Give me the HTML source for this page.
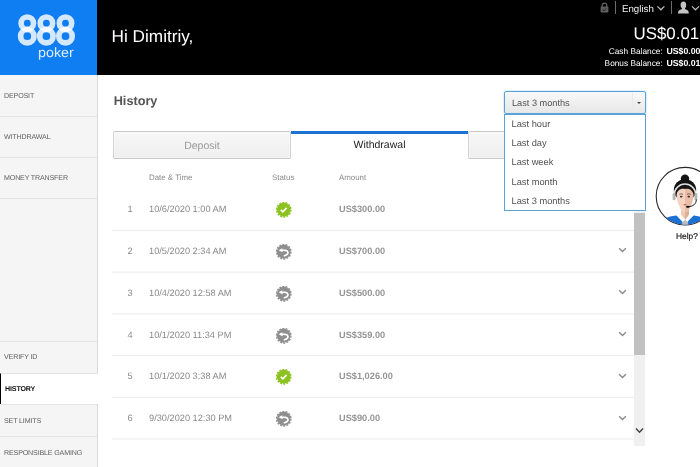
<!DOCTYPE html>
<html><head><meta charset="utf-8">
<style>
*{box-sizing:border-box;margin:0;padding:0}
html,body{width:700px;height:467px;overflow:hidden;background:#fff;text-rendering:geometricPrecision;font-family:"Liberation Sans",sans-serif;}
#hdr{position:absolute;left:0;top:0;width:700px;height:75px;background:#000;}
#logo{position:absolute;left:0;top:0;width:97px;height:75px;background:#0f7ef2;}
#hi{position:absolute;left:111.600px;top:25.500px;color:#fff;font-size:17.2px;line-height:20px;white-space:nowrap}
#side{position:absolute;left:0;top:75px;width:98px;height:392px;background:#f5f5f5;border-right:1px solid #dadada;}
.it{position:absolute;left:0;width:97px;font-size:7.1px;color:#606060;letter-spacing:-0.15px;padding-left:4px;border-bottom:1px solid #e4e4e4;white-space:nowrap}
.t{height:41px;line-height:41px}
.b{height:32px;line-height:33px;border-bottom:none;border-top:1px solid #e4e4e4}
#main{position:absolute;left:98px;top:75px;width:602px;height:392px;background:#fff}
.abs{position:absolute;white-space:nowrap}
.tab{background:linear-gradient(#f7f7f7,#efefef);border:1px solid #cdcdcd;border-radius:1.500px;font-size:10.5px;text-align:center;line-height:28px;box-shadow:inset 0 0 2px #fff;border-color:#c9c9c9 #d4d4d4}
.th{font-size:7.9px;color:#8a8a8a;line-height:10px;margin-top:1px}
.r{font-size:9.22px;color:#8a8a8a;line-height:12px}
b.r{color:#949494}
</style></head><body>
<div id="wrap" style="position:absolute;left:0;top:0;width:700px;height:467px;overflow:hidden;will-change:transform">
<div id="hdr">
 <div id="logo">
  <svg width="97" height="75" viewBox="0 0 97 75">
   <g fill="none" stroke="#fff" stroke-opacity="0.82">
    <circle cx="27.3" cy="23.2" r="6.2" stroke-width="5.6"/><circle cx="27.3" cy="36.2" r="6.7" stroke-width="5.7"/>
    <circle cx="46.4" cy="23.2" r="6.2" stroke-width="5.6"/><circle cx="46.4" cy="36.2" r="6.7" stroke-width="5.7"/>
    <circle cx="65.5" cy="23.2" r="6.2" stroke-width="5.6"/><circle cx="65.5" cy="36.2" r="6.7" stroke-width="5.7"/>
   </g>
   <text x="38" y="57" textLength="35.8" lengthAdjust="spacingAndGlyphs" font-family="Liberation Sans, sans-serif" font-size="13.5" fill="#fff" fill-opacity="0.85">poker</text>
  </svg>
 </div>
 <div id="hi">Hi Dimitriy,</div>
 <svg class="abs" style="left:598px;top:0" width="102" height="16" viewBox="598 0 102 16">
  <!-- lock -->
  <path d="M602.2 7 v-1.6 a2.3 2.3 0 0 1 4.6 0 V7" fill="none" stroke="#5e5e5e" stroke-width="1.300"/>
  <rect x="600.6" y="6.6" width="7.8" height="6" rx="0.800" fill="#5e5e5e"/>
  <path d="M602.7 9.6 l1.3 1.3 2.3 -2.5" fill="none" stroke="#222" stroke-width="1"/>
  <rect x="615" y="1" width="1" height="13" fill="#6c6c6c"/>
  <rect x="671" y="1" width="1" height="13" fill="#6c6c6c"/>
  <path d="M657.4 6.4 l3.5 3.4 3.5 -3.4" fill="none" stroke="#b8b8b8" stroke-width="1.300"/>
  <path d="M692 6.4 l3.5 3.4 3.5 -3.4" fill="none" stroke="#b8b8b8" stroke-width="1.300"/>
  <!-- user -->
  <ellipse cx="683.400" cy="4.900" rx="2.800" ry="3.500" fill="#c4c4c4"/>
  <path d="M677.900 13.400 c0 -2.800 1.700 -3.500 3.700 -4.200 l0.500 -1.500 h2.600 l0.500 1.500 c2 0.700 3.700 1.400 3.700 4.200 z" fill="#c4c4c4"/>
 </svg>
 <div class="abs" style="left:622px;top:2.500px;color:#f2f2f2;font-size:9.7px;line-height:14px">English</div>
 <div class="abs" style="right:0.800px;top:23.600px;color:#fff;font-size:16.9px;line-height:20px">US$0.01</div>
 <div class="abs" style="right:-0.500px;top:44.600px;color:#fff;font-size:8.3px;line-height:12px">Cash Balance: <b style="font-size:8.75px;margin-left:1.400px">US$0.00</b></div>
 <div class="abs" style="right:-0.500px;top:56.600px;color:#fff;font-size:8.3px;line-height:12px">Bonus Balance: <b style="font-size:8.75px;margin-left:1.400px">US$0.01</b></div>
</div>
<div id="side">
 <div class="it t" style="top:0;height:42px;line-height:42px">DEPOSIT</div>
 <div class="it t" style="top:42px">WITHDRAWAL</div>
 <div class="it t" style="top:83px">MONEY TRANSFER</div>
 <div class="it b" style="top:266px;line-height:31px">VERIFY ID</div>
 <div class="it b" style="top:298px;background:#fff;color:#111;font-weight:bold;border-left:1px solid #000;height:31px;width:98px;line-height:30px">HISTORY</div>
 <div class="it b" style="top:329px">SET LIMITS</div>
 <div class="it b" style="top:361px">RESPONSIBLE GAMING</div>
</div>
<div id="main">
 <div class="abs" style="left:15.700px;top:16.500px;font-size:12.7px;font-weight:bold;color:#555;line-height:18px">History</div>
 <!-- tabs -->
 <div class="abs tab" style="left:15px;top:56px;width:178px;height:28px;color:#999">Deposit</div>
 <div class="abs tab" style="left:370px;top:56px;width:60px;height:28px"></div>
 <div class="abs" style="left:193px;top:56px;width:177px;height:29px;background:#fff;border-top:3px solid #1a72d2;font-size:10.5px;color:#222;text-align:center;line-height:23px">Withdrawal</div>
 <!-- table head -->
 <div class="abs th" style="left:51px;top:97px">Date &amp; Time</div>
 <div class="abs th" style="left:174px;top:97px">Status</div>
 <div class="abs th" style="left:241px;top:97px">Amount</div>
 <div class="abs r" style="left:28px;width:8px;text-align:center;top:128.00px">1</div><div class="abs r" style="left:51px;top:128.00px">10/6/2020 1:00 AM</div><svg class="abs" style="left:177.200px;top:126.05px" width="17.500" height="17.500" viewBox="0 0 16 16"><circle cx="8" cy="8" r="6.300" fill="#8cc220"/><circle cx="8" cy="8" r="6.600" fill="none" stroke="#8cc220" stroke-width="1.200" stroke-dasharray="1.900 1.060"/><path d="M5.300 8.100 l1.900 1.800 3.400 -3.600" fill="none" stroke="#fff" stroke-width="1.500"/></svg><b class="abs r" style="left:241px;top:128.00px">US$300.00</b>
 <div class="abs r" style="left:28px;width:8px;text-align:center;top:169.85px">2</div><div class="abs r" style="left:51px;top:169.85px">10/5/2020 2:34 AM</div><svg class="abs" style="left:177.200px;top:167.90px" width="17.500" height="17.500" viewBox="0 0 16 16"><circle cx="8" cy="8" r="6.300" fill="#8e8e8e"/><circle cx="8" cy="8" r="6.600" fill="none" stroke="#8e8e8e" stroke-width="1.200" stroke-dasharray="1.900 1.060"/><path d="M5.600 6.900 C8 6.300 11.800 6.600 11.900 8.700 C11.900 10.300 10.400 11.300 8.600 11.700" fill="none" stroke="#fff" stroke-width="1.500" stroke-linecap="round"/><path d="M3.300 6.700 l3.300 -1.900 0.500 3.700z" fill="#fff"/></svg><b class="abs r" style="left:241px;top:169.85px">US$700.00</b><svg class="abs" style="left:519.800px;top:172.35px" width="9" height="6.300" viewBox="0 0 10 7"><path d="M1.300 1.300 l3.700 3.600 3.700 -3.600" fill="none" stroke="#8a8a8a" stroke-width="1.600"/></svg>
 <div class="abs r" style="left:28px;width:8px;text-align:center;top:211.70px">3</div><div class="abs r" style="left:51px;top:211.70px">10/4/2020 12:58 AM</div><svg class="abs" style="left:177.200px;top:209.75px" width="17.500" height="17.500" viewBox="0 0 16 16"><circle cx="8" cy="8" r="6.300" fill="#8e8e8e"/><circle cx="8" cy="8" r="6.600" fill="none" stroke="#8e8e8e" stroke-width="1.200" stroke-dasharray="1.900 1.060"/><path d="M5.600 6.900 C8 6.300 11.800 6.600 11.900 8.700 C11.900 10.300 10.400 11.300 8.600 11.700" fill="none" stroke="#fff" stroke-width="1.500" stroke-linecap="round"/><path d="M3.300 6.700 l3.300 -1.900 0.500 3.700z" fill="#fff"/></svg><b class="abs r" style="left:241px;top:211.70px">US$500.00</b><svg class="abs" style="left:519.800px;top:214.20px" width="9" height="6.300" viewBox="0 0 10 7"><path d="M1.300 1.300 l3.700 3.600 3.700 -3.600" fill="none" stroke="#8a8a8a" stroke-width="1.600"/></svg>
 <div class="abs r" style="left:28px;width:8px;text-align:center;top:253.55px">4</div><div class="abs r" style="left:51px;top:253.55px">10/1/2020 11:34 PM</div><svg class="abs" style="left:177.200px;top:251.60px" width="17.500" height="17.500" viewBox="0 0 16 16"><circle cx="8" cy="8" r="6.300" fill="#8e8e8e"/><circle cx="8" cy="8" r="6.600" fill="none" stroke="#8e8e8e" stroke-width="1.200" stroke-dasharray="1.900 1.060"/><path d="M5.600 6.900 C8 6.300 11.800 6.600 11.900 8.700 C11.900 10.300 10.400 11.300 8.600 11.700" fill="none" stroke="#fff" stroke-width="1.500" stroke-linecap="round"/><path d="M3.300 6.700 l3.300 -1.900 0.500 3.700z" fill="#fff"/></svg><b class="abs r" style="left:241px;top:253.55px">US$359.00</b><svg class="abs" style="left:519.800px;top:256.05px" width="9" height="6.300" viewBox="0 0 10 7"><path d="M1.300 1.300 l3.700 3.600 3.700 -3.600" fill="none" stroke="#8a8a8a" stroke-width="1.600"/></svg>
 <div class="abs r" style="left:28px;width:8px;text-align:center;top:295.40px">5</div><div class="abs r" style="left:51px;top:295.40px">10/1/2020 3:38 AM</div><svg class="abs" style="left:177.200px;top:293.45px" width="17.500" height="17.500" viewBox="0 0 16 16"><circle cx="8" cy="8" r="6.300" fill="#8cc220"/><circle cx="8" cy="8" r="6.600" fill="none" stroke="#8cc220" stroke-width="1.200" stroke-dasharray="1.900 1.060"/><path d="M5.300 8.100 l1.900 1.800 3.400 -3.600" fill="none" stroke="#fff" stroke-width="1.500"/></svg><b class="abs r" style="left:241px;top:295.40px">US$1,026.00</b><svg class="abs" style="left:519.800px;top:297.90px" width="9" height="6.300" viewBox="0 0 10 7"><path d="M1.300 1.300 l3.700 3.600 3.700 -3.600" fill="none" stroke="#8a8a8a" stroke-width="1.600"/></svg>
 <div class="abs r" style="left:28px;width:8px;text-align:center;top:337.25px">6</div><div class="abs r" style="left:51px;top:337.25px">9/30/2020 12:30 PM</div><svg class="abs" style="left:177.200px;top:335.30px" width="17.500" height="17.500" viewBox="0 0 16 16"><circle cx="8" cy="8" r="6.300" fill="#8e8e8e"/><circle cx="8" cy="8" r="6.600" fill="none" stroke="#8e8e8e" stroke-width="1.200" stroke-dasharray="1.900 1.060"/><path d="M5.600 6.900 C8 6.300 11.800 6.600 11.900 8.700 C11.900 10.300 10.400 11.300 8.600 11.700" fill="none" stroke="#fff" stroke-width="1.500" stroke-linecap="round"/><path d="M3.300 6.700 l3.300 -1.900 0.500 3.700z" fill="#fff"/></svg><b class="abs r" style="left:241px;top:337.25px">US$90.00</b><svg class="abs" style="left:519.800px;top:339.75px" width="9" height="6.300" viewBox="0 0 10 7"><path d="M1.300 1.300 l3.700 3.600 3.700 -3.600" fill="none" stroke="#8a8a8a" stroke-width="1.600"/></svg>
 <svg class="abs" style="left:14px;top:0" width="522" height="392"><rect x="0" y="154.90" width="522" height="1" fill="#ebebeb"/><rect x="0" y="196.62" width="522" height="1" fill="#ebebeb"/><rect x="0" y="238.34" width="522" height="1" fill="#ebebeb"/><rect x="0" y="280.06" width="522" height="1" fill="#ebebeb"/><rect x="0" y="321.78" width="522" height="1" fill="#ebebeb"/><rect x="0" y="363.50" width="522" height="1" fill="#ebebeb"/></svg>
 <!-- scrollbar -->
 <div class="abs" style="left:536px;top:135px;width:11px;height:236px;background:#f0f0f0"></div>
 <div class="abs" style="left:536px;top:138px;width:11px;height:142px;background:#c1c1c1"></div>
 <svg class="abs" style="left:536px;top:350px" width="11" height="12" viewBox="0 0 11 12"><path d="M2 3.6 l3.5 3.6 3.5 -3.6" fill="none" stroke="#444" stroke-width="1.5"/></svg>
 <!-- select -->
 <div class="abs" style="left:406px;top:16px;width:142px;height:23px;border:1px solid #5aa3d8;border-radius:2px;background:linear-gradient(#f9f9f9,#e7e7e7);box-shadow:0 0 2px #9cc9ec;font-size:9.2px;color:#505050;line-height:23px;padding-left:7px">Last 3 months
  <div class="abs" style="left:127px;top:1px;width:1px;height:19px;background:#e9e9e9"></div>
  <div class="abs" style="left:131.800px;top:9.600px;width:0;height:0;border-left:2.600px solid transparent;border-right:2.600px solid transparent;border-top:2.800px solid #444"></div>
 </div>
 <div class="abs" style="left:406px;top:39px;width:142px;height:97px;border:1px solid #5aa3d8;background:#fff;font-size:9.3px;color:#505050;line-height:19.2px;padding:0 0 0 6.500px">
  <div>Last hour</div><div>Last day</div><div>Last week</div><div>Last month</div><div>Last 3 months</div>
 </div>
 <!-- help -->
 <svg class="abs" style="left:556px;top:90px" width="46" height="62" viewBox="654 165 46 62">
  <defs><clipPath id="cc"><circle cx="685" cy="196.2" r="28.6"/></clipPath></defs>
  <circle cx="685" cy="196.2" r="28.8" fill="#fff" stroke="#2a2a2a" stroke-width="1.1"/>
  <g clip-path="url(#cc)">
   <path d="M655 228 C657 219.500 667 217 676 215.600 L694 215.600 C703 217 713 219.500 715 228 Z" fill="#1c6fd3"/>
   <path d="M676 215 L685 224.500 L694 215 L690.500 211 L679.500 211 Z" fill="#fff"/>
   <path d="M682.300 222.300 l2.700 -2.600 2.700 2.600 1.200 4 h-7.800 z" fill="#b9b9b9"/>
   <path d="M681 206 h8 v8.500 l-4 5.200 l-4 -5.200 z" fill="#efc9b4"/>
   <path d="M685 206 h4 v8.500 l-4 5.200 z" fill="#dcae98"/>
   <circle cx="685" cy="178.600" r="4.200" fill="#141414"/>
   <ellipse cx="685" cy="190" rx="11.200" ry="10.800" fill="#141414"/>
   <path d="M676.600 194.500 C676.600 188 680 185.500 685 185.500 C690 185.500 693.400 188 693.400 194.500 C693.400 202.500 689 212.200 685 212.200 C681 212.200 676.600 202.500 676.600 194.500 Z" fill="#f4d3c1"/>
   <path d="M685 185.500 C690 185.500 693.400 188 693.400 194.500 C693.400 202.500 689 212.200 685 212.200 Z" fill="#e9bda8"/>
   <path d="M675.800 196 C675 186.500 680 182.500 685 182.500 C690 182.500 695 186.500 694.200 196 C692.800 191 690.500 188.200 685 189 C679.500 188.200 677.200 191 675.800 196 Z" fill="#141414"/>
   <path d="M674.200 195 a10.800 11 0 0 1 21.600 0" fill="none" stroke="#dedede" stroke-width="1.700"/>
   <rect x="672.600" y="193.200" width="2.900" height="7" rx="1.300" fill="#b5b5b5"/>
   <rect x="694.500" y="193.200" width="2.900" height="7" rx="1.300" fill="#b5b5b5"/>
   <path d="M696.300 199.500 C696.300 204.500 692.500 206.300 688.800 206.700" fill="none" stroke="#141414" stroke-width="1"/>
   <ellipse cx="687.800" cy="206.800" rx="1.800" ry="1.100" fill="#141414"/>
   <ellipse cx="681.200" cy="196.600" rx="1.300" ry="0.900" fill="#2a2a2a"/><ellipse cx="688.800" cy="196.600" rx="1.300" ry="0.900" fill="#2a2a2a"/>
   <path d="M679.300 194.300 q1.900 -1 3.700 0 M687 194.300 q1.900 -1 3.700 0" fill="none" stroke="#2a2a2a" stroke-width="0.600"/>
   <ellipse cx="685" cy="204.700" rx="1.600" ry="0.800" fill="#c8675c"/>
  </g>
 </svg>
 <div class="abs" style="left:578px;top:154.600px;font-size:8.4px;color:#1c1c1c;line-height:12px;-webkit-text-stroke:0.2px #1c1c1c">Help?</div>
</div>
</div>
</body></html>
